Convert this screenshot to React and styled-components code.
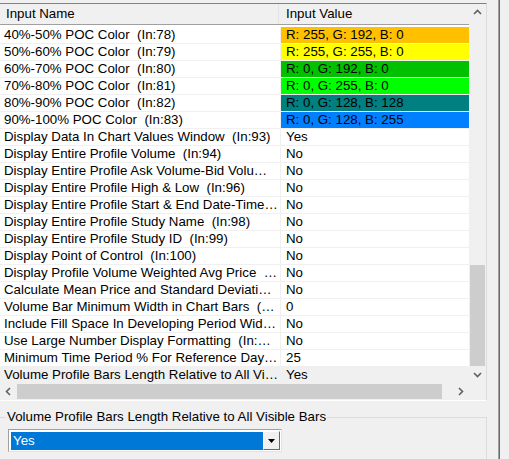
import React from 'react'
import styled, { createGlobalStyle } from 'styled-components'

const GlobalStyle = createGlobalStyle`
  html, body {
    margin: 0;
    padding: 0;
    background: #f0f0f0;
  }
  body {
    font-family: "Liberation Sans", Arial, sans-serif;
    font-size: 13.3px;
    color: #000;
  }
  * { box-sizing: border-box; }
`

const Window = styled.div`
  width: 509px;
  height: 459px;
  overflow: hidden;
  display: flex;
  background: #f0f0f0;
`

const Main = styled.div`
  width: 498px;
  flex-shrink: 0;
  padding: 3px 11px 0 0;
  display: flex;
  flex-direction: column;
`

const Splitter = styled.div`
  width: 2px;
  flex-shrink: 0;
  border-left: 1px solid #a0a0a0;
  background: #696969;
`

const ListView = styled.div`
  display: grid;
  grid-template-columns: 469px 17px;
  grid-template-rows: 379px 17px;
  border-top: 1px solid #828282;
  border-right: 1px solid #dcdcdc;
  border-bottom: 1px solid #fff;
  background: #fff;
  flex-shrink: 0;
`

const Content = styled.div`
  overflow: hidden;
  background: #fff;
`

const Header = styled.div`
  display: grid;
  grid-template-columns: 279px 1fr;
  height: 21px;
  background: #f0f0f0;
  border-bottom: 1px solid #a0a0a0;
  margin-bottom: 2px;
`

const HeaderCell = styled.div`
  padding-left: ${p => (p.$first ? 6 : 7)}px;
  line-height: 20px;
  border-right: ${p => (p.$first ? '1px solid #e3e3e3' : 'none')};
  white-space: nowrap;
`

const Row = styled.div`
  display: grid;
  grid-template-columns: 281px 1fr;
  height: 17px;
  border-bottom: 1px solid #f0f0f0;
  background: ${p => (p.$selected ? '#f0f0f0' : '#fff')};
`

const NameCell = styled.div`
  padding-left: 4px;
  padding-right: 2px;
  line-height: 16px;
  white-space: pre;
  overflow: hidden;
  text-overflow: ellipsis;
  border-right: 1px solid #f0f0f0;
`

const ValueCell = styled.div`
  padding-left: 5px;
  line-height: 16px;
  white-space: nowrap;
  background: ${p => p.$color || 'transparent'};
`

const VScroll = styled.div`
  display: flex;
  flex-direction: column;
  background: #f0f0f0;
`

const HScroll = styled.div`
  display: flex;
  background: #f0f0f0;
`

const ArrowButton = styled.div`
  width: 17px;
  height: 17px;
  flex-shrink: 0;
  display: flex;
  align-items: center;
  justify-content: center;
`

const Track = styled.div`
  flex: 1;
  display: flex;
  flex-direction: ${p => (p.$vertical ? 'column' : 'row')};
`

const Thumb = styled.div`
  background: #cdcdcd;
  ${p =>
    p.$vertical
      ? `margin: ${p.$start}px 1px 0 1px; height: ${p.$size}px;`
      : `margin: 1px 0 1px ${p.$start}px; width: ${p.$size}px;`}
`

const Corner = styled.div`
  background: #f0f0f0;
`

const Group = styled.fieldset`
  margin: 8px 0 0 0;
  padding: 4px 0 0 6px;
  border: 1px solid #dcdcdc;
  border-left: none;
  min-width: 0;
  height: 80px;
  flex-shrink: 0;
`

const Legend = styled.legend`
  padding: 0 1px;
  line-height: 16px;
`

const Combo = styled.div`
  margin-left: 2px;
  width: 274px;
  height: 23px;
  display: flex;
  padding: 2px 1px 1px 2px;
  background: #fff;
  border: 1px solid;
  border-color: #a0a0a0 #e3e3e3 #e3e3e3 #a0a0a0;
`

const ComboText = styled.div`
  flex: 1;
  background: #0078d7;
  color: #fff;
  padding-left: 2px;
  line-height: 18px;
`

const ComboButton = styled.div`
  width: 17px;
  display: flex;
  align-items: center;
  justify-content: center;
  background: #f0f0f0;
  border: 1px solid;
  border-color: #fff #696969 #696969 #fff;
  margin-top: -1px;
`

const Chevron = ({ dir }) => {
  const rot = { up: 0, down: 180, left: -90, right: 90 }[dir]
  return (
    <svg width="9" height="9" viewBox="0 0 9 9" style={{ transform: `rotate(${rot}deg)` }}>
      <polyline points="1,6 4.5,2.5 8,6" fill="none" stroke="#606060" strokeWidth="1.6" />
    </svg>
  )
}

const rows = [
  ['40%-50% POC Color  (In:78)', 'R: 255, G: 192, B: 0', '#ffc000'],
  ['50%-60% POC Color  (In:79)', 'R: 255, G: 255, B: 0', '#ffff00'],
  ['60%-70% POC Color  (In:80)', 'R: 0, G: 192, B: 0', '#00c000'],
  ['70%-80% POC Color  (In:81)', 'R: 0, G: 255, B: 0', '#00ff00'],
  ['80%-90% POC Color  (In:82)', 'R: 0, G: 128, B: 128', '#008080'],
  ['90%-100% POC Color  (In:83)', 'R: 0, G: 128, B: 255', '#0080ff'],
  ['Display Data In Chart Values Window  (In:93)', 'Yes'],
  ['Display Entire Profile Volume  (In:94)', 'No'],
  ['Display Entire Profile Ask Volume-Bid Volume  (In:95)', 'No'],
  ['Display Entire Profile High & Low  (In:96)', 'No'],
  ['Display Entire Profile Start & End Date-Time  (In:97)', 'No'],
  ['Display Entire Profile Study Name  (In:98)', 'No'],
  ['Display Entire Profile Study ID  (In:99)', 'No'],
  ['Display Point of Control  (In:100)', 'No'],
  ['Display Profile Volume Weighted Avg Price  (In:101)', 'No'],
  ['Calculate Mean Price and Standard Deviation  (In:102)', 'No'],
  ['Volume Bar Minimum Width in Chart Bars  (In:103)', '0'],
  ['Include Fill Space In Developing Period Width  (In:104)', 'No'],
  ['Use Large Number Display Formatting  (In:105)', 'No'],
  ['Minimum Time Period % For Reference Day  (In:106)', '25'],
  ['Volume Profile Bars Length Relative to All Visible Bars  (In:107)', 'Yes'],
]

const App = () => {
  return (
    <Window>
      <GlobalStyle />
      <Main>
        <ListView>
          <Content>
            <Header>
              <HeaderCell $first>Input Name</HeaderCell>
              <HeaderCell>Input Value</HeaderCell>
            </Header>
            {rows.map(([name, value, color], i) => (
              <Row key={name} $selected={i === rows.length - 1}>
                <NameCell>{name}</NameCell>
                <ValueCell $color={color}>{value}</ValueCell>
              </Row>
            ))}
          </Content>
          <VScroll>
            <ArrowButton><Chevron dir="up" /></ArrowButton>
            <Track $vertical>
              <Thumb $vertical $start={244} $size={101} />
            </Track>
            <ArrowButton><Chevron dir="down" /></ArrowButton>
          </VScroll>
          <HScroll>
            <ArrowButton><Chevron dir="left" /></ArrowButton>
            <Track>
              <Thumb $start={0} $size={425} />
            </Track>
            <ArrowButton><Chevron dir="right" /></ArrowButton>
          </HScroll>
          <Corner />
        </ListView>
        <Group>
          <Legend>Volume Profile Bars Length Relative to All Visible Bars</Legend>
          <Combo>
            <ComboText>Yes</ComboText>
            <ComboButton>
              <svg width="7" height="4" viewBox="0 0 7 4">
                <polygon points="0,0 7,0 3.5,4" fill="#000" />
              </svg>
            </ComboButton>
          </Combo>
        </Group>
      </Main>
      <Splitter />
    </Window>
  )
}

export default App
